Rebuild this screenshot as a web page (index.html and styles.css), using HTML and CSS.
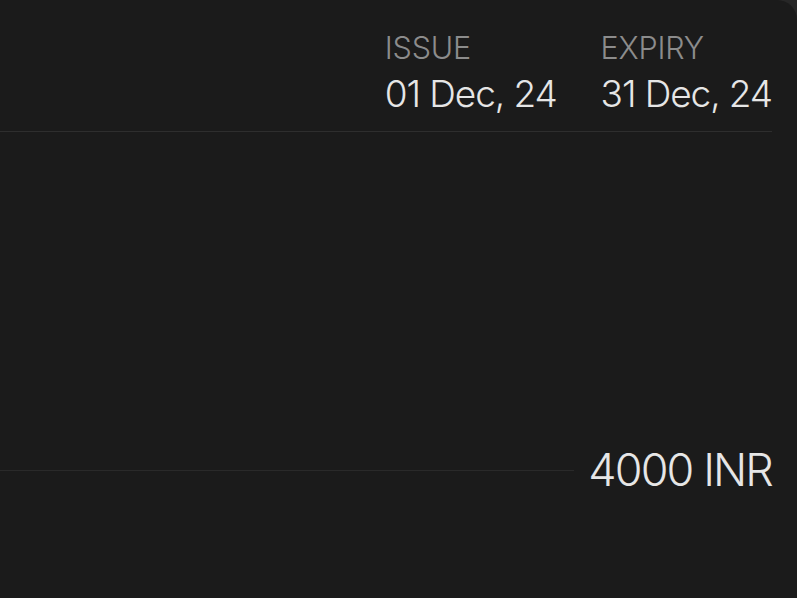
FILE: index.html
```html
<!DOCTYPE html>
<html>
<head>
<meta charset="utf-8">
<link rel="stylesheet" href="styles.css">
</head>
<body>
<div class="card">
  <div class="meta">
    <div class="meta-col">
      <div class="label">ISSUE</div>
      <div class="date">01 Dec, 24</div>
    </div>
    <div class="meta-col">
      <div class="label">EXPIRY</div>
      <div class="date">31 Dec, 24</div>
    </div>
  </div>
  <div class="body"></div>
  <div class="total">
    <div class="rule"></div>
    <div class="amount">4000 INR</div>
  </div>
</div>
</body>
</html>
```
FILE: styles.css
```css
html, body {
  margin: 0;
  padding: 0;
  background: #272727;
  height: 100%;
  overflow: hidden;
}
.card {
  background: #1b1b1b;
  height: 598px;
  border-top-right-radius: 20px;
  padding-right: 25px;
  font-family: Inter, "Noto Sans", sans-serif;
  font-weight: 300;
  color: #e6e6e6;
  box-sizing: border-box;
}
.meta {
  display: flex;
  justify-content: flex-end;
  gap: 44px;
  padding-top: 32px;
  padding-bottom: 17px;
  border-bottom: 1px solid #2e2e2e;
}
.meta-col {
  display: flex;
  flex-direction: column;
  gap: 10px;
}
.label {
  font-size: 30.5px;
  line-height: 32px;
  color: #8c8c8c;
  letter-spacing: -0.2px;
}
.date {
  font-size: 37px;
  line-height: 40px;
  letter-spacing: -1.1px;
}
.body {
  height: 314px;
}
.total {
  display: flex;
  align-items: center;
  gap: 14px;
}
.rule {
  flex: 1;
  height: 1px;
  background: #2a2a2a;
}
.amount {
  font-size: 45px;
  line-height: 48px;
  letter-spacing: -1.9px;
}
```
